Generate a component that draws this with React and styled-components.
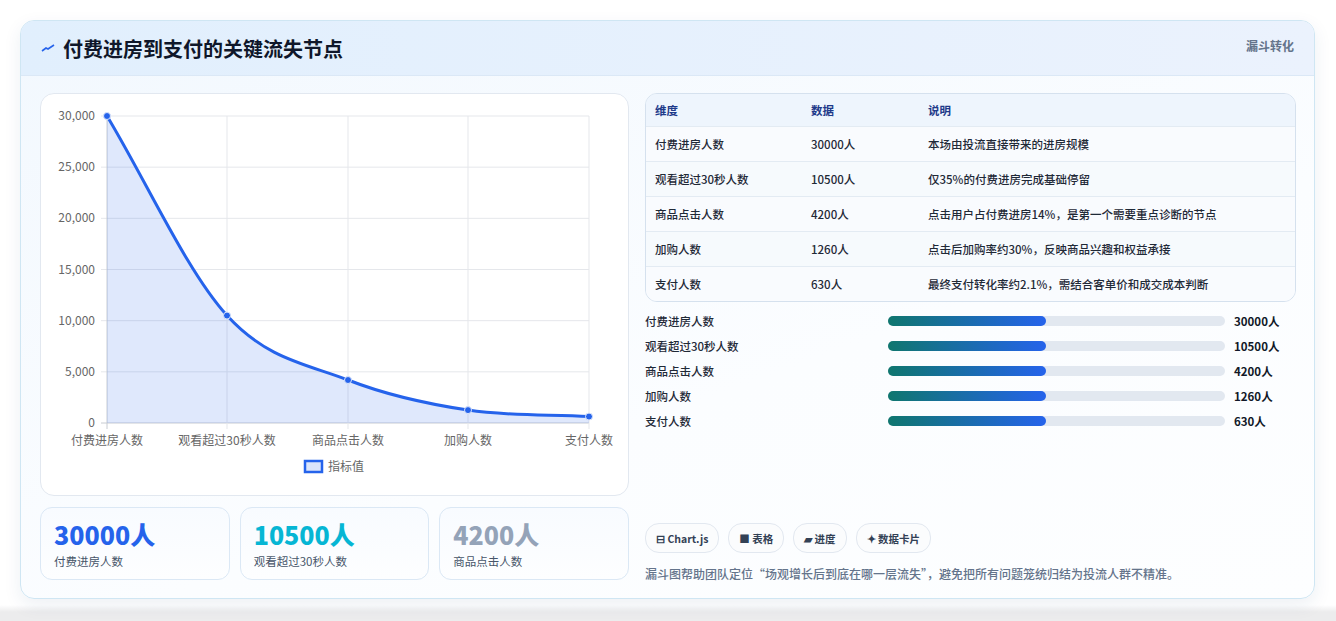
import React from "react";
import styled, { createGlobalStyle } from "styled-components";

const Global = createGlobalStyle`
  html, body { margin: 0; padding: 0; background: #f1f2f4; }
  body { font-family: "Noto Sans CJK SC", "Noto Sans", sans-serif; }
`;
const Page = styled.div`
  height: 621px; background: linear-gradient(#ffffff 0, #ffffff 605px, #ececed 612px);
  padding: 20px 21px 0 20px; box-sizing: border-box;
`;
const Card = styled.div`
  height: 579px; box-sizing: border-box; border: 1px solid #cfe6f3; border-radius: 14px;
  background: linear-gradient(160deg, #f2f8fe, #fbfdff 60%, #fdfeff);
  box-shadow: 0 6px 18px rgba(30,60,110,0.08); overflow: hidden;
`;
const Header = styled.div`
  height: 54px; display: flex; align-items: center; justify-content: space-between;
  padding: 0 20px; background: linear-gradient(90deg, #e1effd, #ebf2fd);
  border-bottom: 1px solid #dbe8f6;
`;
const Title = styled.div`
  display: flex; align-items: center; gap: 8px; font-size: 20px; font-weight: 700; color: #0f172a;
`;
const Tag = styled.div`
  align-self: flex-start; margin-top: 16px; font-size: 12px; font-weight: 700; color: #64748b;
`;
const Body = styled.div`
  display: grid; grid-template-columns: 589px 651px; gap: 16px; padding: 17px 19px 0 19px;
`;
const Col = styled.div` display: flex; flex-direction: column; `;
const ChartBox = styled.div`
  height: 403px; box-sizing: border-box; border: 1px solid #e2e8f0; border-radius: 14px; background: #fff;
`;
const Stats = styled.div`
  display: grid; grid-template-columns: repeat(3, 1fr); gap: 10px; margin-top: 11px;
`;
const Stat = styled.div`
  height: 73px; box-sizing: border-box; border: 1px solid #dbe8f5; border-radius: 12px;
  background: linear-gradient(#f8fbff, #fdfeff); padding: 10px 13px;
`;
const StatNum = styled.div`
  font-size: 25px; font-weight: 800; line-height: 32px; color: ${p => p.c};
`;
const StatLbl = styled.div` font-size: 11.5px; color: #475569; margin-top: 3px; `;
const Table = styled.div`
  border: 1px solid #d5e1ee; border-radius: 12px; overflow: hidden; background: #f8fbfe;
`;
const Row = styled.div`
  display: grid; grid-template-columns: 156px 117px 1fr; align-items: center; padding-left: 9px;
  height: ${p => p.head ? 32 : 34}px; font-size: 11.5px;
  color: ${p => p.head ? "#1e3a8a" : "#1f2937"}; font-weight: ${p => p.head ? 700 : 500};
  background: ${p => p.head ? "#eef5fd" : p.alt ? "#f6fafd" : "#f9fbfe"};
  border-top: ${p => p.head ? "none" : "1px solid #e3ebf3"};
`;
const Bars = styled.div` display: flex; flex-direction: column; gap: 7px; margin-top: 10px; `;
const BarRow = styled.div`
  display: grid; grid-template-columns: 243px 337px 1fr; align-items: center; height: 18px;
  font-size: 11.5px; color: #1f2937; font-weight: 500;
`;
const Track = styled.div` height: 10px; border-radius: 5px; background: #e2e8f0; `;
const Fill = styled.div`
  height: 100%; border-radius: 5px; background: linear-gradient(90deg, #0f766e, #2563eb);
`;
const Val = styled.div` padding-left: 9px; font-weight: 700; color: #111827; `;
const Chips = styled.div` display: flex; gap: 9px; margin-top: 93px; `;
const Chip = styled.div`
  height: 28px; padding: 0 10px; display: flex; align-items: center; gap: 4px; border-radius: 14px;
  border: 1px solid #e2e8f0; background: #fbfcfd; font-size: 10.5px; font-weight: 700; color: #334155;
`;
const Note = styled.div` margin-top: 12px; font-size: 12px; color: #64748b; font-weight: 500; `;

const xs = [66, 186, 307, 427, 548];
const vals = [30000, 10500, 4200, 1260, 630];
const y = v => 329 - (v / 30000) * 307;
const pts = vals.map((v, i) => [xs[i], y(v)]);
function curve() {
  const n = pts.length;
  const dx = [], sl = [];
  for (let i = 0; i < n - 1; i++) { dx[i] = pts[i + 1][0] - pts[i][0]; sl[i] = (pts[i + 1][1] - pts[i][1]) / dx[i]; }
  const m = [sl[0]];
  for (let i = 1; i < n - 1; i++) m[i] = sl[i - 1] * sl[i] <= 0 ? 0 : (sl[i - 1] + sl[i]) / 2;
  m[n - 1] = sl[n - 2];
  for (let i = 0; i < n - 1; i++) {
    const a = m[i] / sl[i], b = m[i + 1] / sl[i], s = a * a + b * b;
    if (s > 9) { const t = 3 / Math.sqrt(s); m[i] = t * a * sl[i]; m[i + 1] = t * b * sl[i]; }
  }
  let d = `M${pts[0][0]},${pts[0][1]}`;
  for (let i = 0; i < n - 1; i++) {
    const h = dx[i] / 3;
    d += ` C${pts[i][0] + h},${pts[i][1] + m[i] * h} ${pts[i + 1][0] - h},${pts[i + 1][1] - m[i + 1] * h} ${pts[i + 1][0]},${pts[i + 1][1]}`;
  }
  return d;
}
const labels = ["付费进房人数", "观看超过30秒人数", "商品点击人数", "加购人数", "支付人数"];
const notes = ["本场由投流直接带来的进房规模", "仅35%的付费进房完成基础停留", "点击用户占付费进房14%，是第一个需要重点诊断的节点", "点击后加购率约30%，反映商品兴趣和权益承接", "最终支付转化率约2.1%，需结合客单价和成交成本判断"];

function Chart() {
  const d = curve();
  const tf = { fontFamily: "Noto Sans CJK SC, sans-serif", fontSize: 12, fill: "#666" };
  return (
    <svg width="587" height="401" viewBox="0 0 587 401">
      {[0, 5000, 10000, 15000, 20000, 25000, 30000].map(v => (
        <g key={v}>
          <line x1="60" x2="548" y1={y(v)} y2={y(v)} stroke={v === 0 ? "#c8ccd2" : "#e5e7eb"} />
          <text x="54" y={y(v) + 4} textAnchor="end" {...tf}>{v.toLocaleString("en-US")}</text>
        </g>
      ))}
      {xs.map((x, i) => (
        <g key={x}>
          <line x1={x} x2={x} y1="22" y2="335" stroke={i === 0 ? "#c8ccd2" : "#e5e7eb"} />
          <text x={x} y="351" textAnchor="middle" {...tf}>{labels[i]}</text>
        </g>
      ))}
      <path d={`${d} L548,329 L66,329 Z`} fill="rgba(37,99,235,0.15)" />
      <path d={d} fill="none" stroke="#2563eb" strokeWidth="3" />
      {pts.map(([px, py], i) => <circle key={i} cx={px} cy={py} r="3.5" fill="#2563eb" stroke="#dbe5fb" strokeWidth="1" />)}
      <rect x="264" y="367" width="17" height="11" fill="#dbe5fb" stroke="#2563eb" strokeWidth="2.5" />
      <text x="287" y="377" {...tf}>指标值</text>
    </svg>
  );
}

export default function App() {
  return (
    <Page>
      <Global />
      <Card>
        <Header>
          <Title>
            <svg width="14" height="10" viewBox="0 0 14 10"><path d="M1 8 L5 5 L7 6 L13 2" stroke="#2563eb" strokeWidth="1.6" fill="none" /></svg>
            付费进房到支付的关键流失节点
          </Title>
          <Tag>漏斗转化</Tag>
        </Header>
        <Body>
          <Col>
            <ChartBox><Chart /></ChartBox>
            <Stats>
              <Stat><StatNum c="#2563eb">30000人</StatNum><StatLbl>付费进房人数</StatLbl></Stat>
              <Stat><StatNum c="#06b6d4">10500人</StatNum><StatLbl>观看超过30秒人数</StatLbl></Stat>
              <Stat><StatNum c="#94a3b8">4200人</StatNum><StatLbl>商品点击人数</StatLbl></Stat>
            </Stats>
          </Col>
          <Col>
            <Table>
              <Row head><span>维度</span><span>数据</span><span>说明</span></Row>
              {labels.map((l, i) => (
                <Row key={l} alt={i % 2 === 1}><span>{l}</span><span>{vals[i]}人</span><span>{notes[i]}</span></Row>
              ))}
            </Table>
            <Bars>
              {labels.map((l, i) => (
                <BarRow key={l}>
                  <span>{l}</span>
                  <Track><Fill style={{ width: "47%" }} /></Track>
                  <Val>{vals[i]}人</Val>
                </BarRow>
              ))}
            </Bars>
            <Chips>
              <Chip>⊟ Chart.js</Chip>
              <Chip>■ 表格</Chip>
              <Chip>▰ 进度</Chip>
              <Chip>✦ 数据卡片</Chip>
            </Chips>
            <Note>漏斗图帮助团队定位“场观增长后到底在哪一层流失”，避免把所有问题笼统归结为投流人群不精准。</Note>
          </Col>
        </Body>
      </Card>
    </Page>
  );
}
